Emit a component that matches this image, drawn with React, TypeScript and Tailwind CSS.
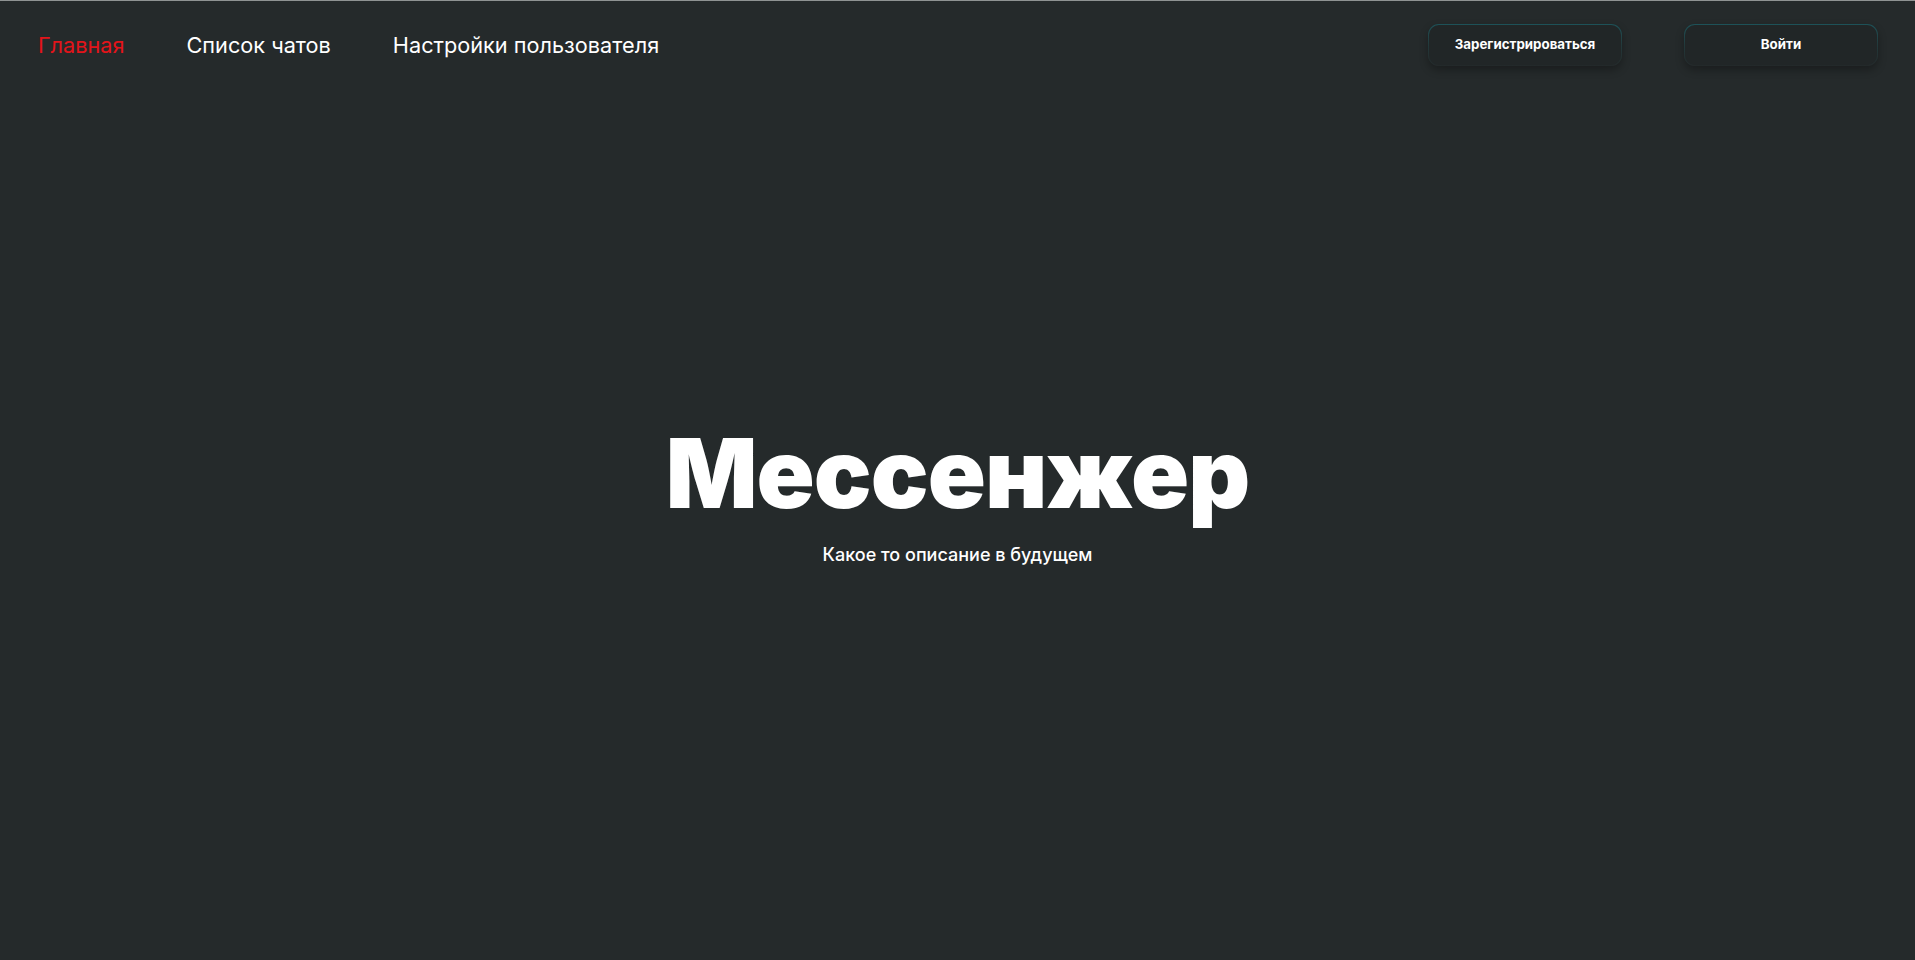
export default function App() {
  const navItems = [
    { label: "Главная", active: true },
    { label: "Список чатов", active: false },
    { label: "Настройки пользователя", active: false },
  ];

  return (
    <div
      className="flex min-h-screen flex-col border-t border-[#8f9393] bg-[#252a2b] text-white"
      style={{ fontFamily: "Inter, 'Noto Sans', sans-serif" }}
    >
      {/* Header */}
      <header className="flex h-[88px] items-center justify-between pl-[38px] pr-[37px]">
        <nav className="flex items-center gap-[62px]">
          {navItems.map((item) => (
            <a
              key={item.label}
              href="#"
              className={`text-[21.7px] font-normal ${item.active ? "text-[#e3141a]" : "text-white"}`}
            >
              {item.label}
            </a>
          ))}
        </nav>

        <div className="flex items-center gap-[62px]">
          {["Зарегистрироваться", "Войти"].map((label) => (
            <div
              key={label}
              className="rounded-[11px] bg-gradient-to-b from-[#1d5258] via-[#22393b] to-[#23292a] p-px shadow-[0_4px_8px_rgba(0,0,0,0.3)]"
            >
              <button className="flex h-[40px] w-[192px] items-center justify-center rounded-[10px] bg-[#212627] text-[13.3px] font-bold text-white">
                {label}
              </button>
            </div>
          ))}
        </div>
      </header>

      {/* Hero */}
      <main className="flex flex-col items-center pt-[336px]">
        <h1 className="text-[96px] font-black leading-none tracking-[-0.01em]">Мессенжер</h1>
        <p className="mt-[20px] text-[18px] font-medium">Какое то описание в будущем</p>
      </main>
    </div>
  );
}
